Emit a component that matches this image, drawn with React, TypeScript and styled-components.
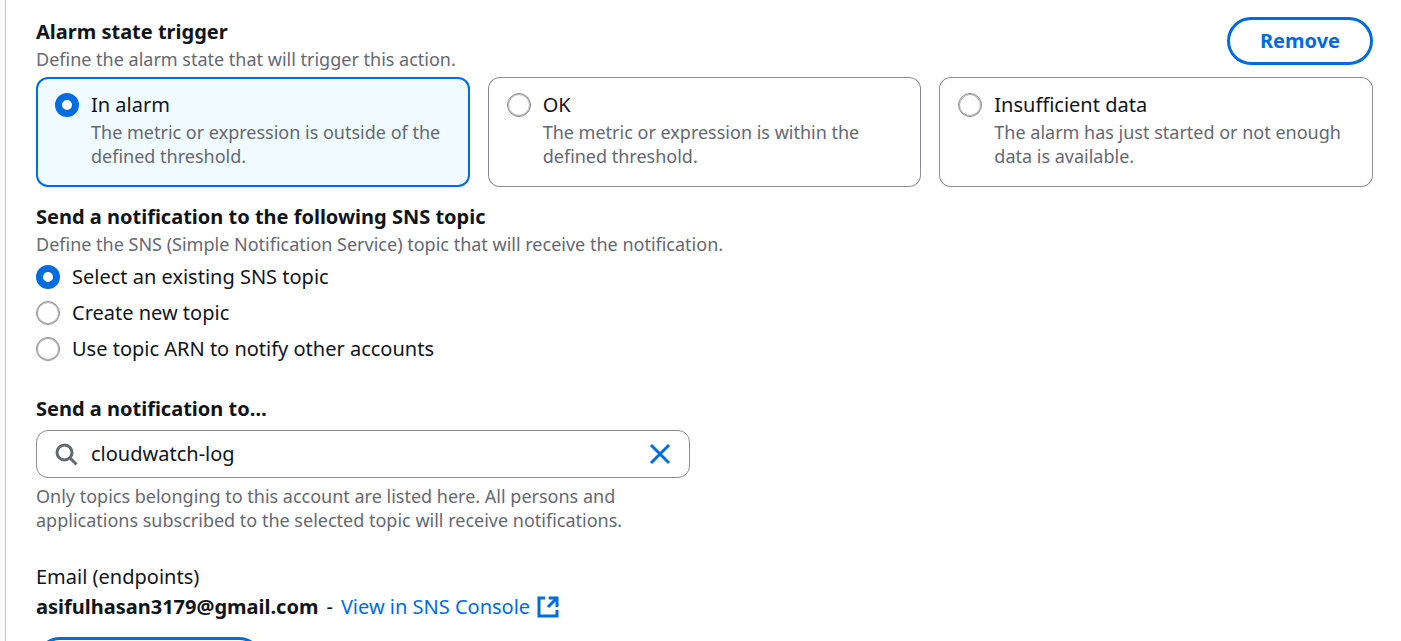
import React, { useState } from "react";
import styled, { createGlobalStyle } from "styled-components";

const GlobalStyle = createGlobalStyle`
  *, *::before, *::after { box-sizing: border-box; }
  body {
    margin: 0;
    background: #fafafa;
    color: #0f141a;
    font-family: "Noto Sans", "Open Sans", sans-serif;
    font-size: 20px;
    line-height: 30px;
  }
`;

const Page = styled.main`
  height: 100vh;
  padding-left: 5px;
  overflow: hidden;
`;

const Panel = styled.form`
  display: flex;
  flex-direction: column;
  min-height: 100%;
  padding: 17px 28px 30px 30px;
  border-left: 1px solid #c6c6cd;
  background: #ffffff;
`;

const Header = styled.div`
  display: flex;
  align-items: flex-start;
  justify-content: space-between;
`;

const Heading = styled.h3`
  margin: 0;
  font-size: 20px;
  font-weight: 700;
  line-height: 30px;
`;

const Hint = styled.p`
  margin: 0;
  color: #656871;
  font-size: 18px;
  line-height: 24px;
`;

const OutlineButton = styled.button`
  height: 48px;
  padding: 0 30px;
  border: 3px solid #006ce0;
  border-radius: 24px;
  background: #ffffff;
  color: #006ce0;
  font: inherit;
  font-weight: 700;
  cursor: pointer;
`;

const Tiles = styled.div`
  display: grid;
  grid-template-columns: repeat(3, 1fr);
  gap: 18px;
  margin-top: 6px;
`;

const Tile = styled.label<{ $selected: boolean }>`
  display: flex;
  gap: 12px;
  padding: 16px 12px 19px 19px;
  border-radius: 12px;
  background: ${(p) => (p.$selected ? "#f0fbff" : "#ffffff")};
  box-shadow: inset 0 0 0 ${(p) => (p.$selected ? "2px #006ce0" : "1px #8c8c94")};
  cursor: pointer;
`;

const TileText = styled.span`
  display: flex;
  flex-direction: column;
  gap: 3px;
  line-height: 24px;
`;

const TileHint = styled.span`
  color: #656871;
  font-size: 18px;
`;

const Radio = styled.input`
  flex: none;
  appearance: none;
  width: 24px;
  height: 24px;
  margin: 0;
  border: 1px solid #8c8c94;
  border-radius: 50%;
  background: #ffffff;
  box-shadow: inset 0 0 0 1px #b4b4ba;
  cursor: pointer;

  &:checked {
    border: 7px solid #006ce0;
    box-shadow: none;
  }
`;

const Section = styled.section`
  margin-top: 15px;
`;

const Options = styled.div`
  display: flex;
  flex-direction: column;
  align-items: flex-start;
  gap: 12px;
  margin-top: 9px;
`;

const Option = styled.label`
  display: flex;
  gap: 12px;
  line-height: 24px;
  cursor: pointer;
`;

const HalfWidth = styled.div`
  display: grid;
  grid-template-columns: 1fr 1fr;
  gap: 30px;
  margin-top: 33px;
`;

const Field = styled.div`
  display: flex;
  flex-direction: column;
  gap: 6px;
`;

const FieldLabel = styled.label`
  font-weight: 700;
`;

const SearchBox = styled.div`
  display: flex;
  align-items: center;
  gap: 13px;
  height: 48px;
  padding: 0 17px;
  border: 1px solid #8c8c94;
  border-radius: 12px;
`;

const SearchInput = styled.input`
  flex: 1;
  min-width: 0;
  padding: 0;
  border: 0;
  outline: 0;
  background: transparent;
  color: inherit;
  font: inherit;
`;

const ClearButton = styled.button`
  display: flex;
  padding: 0;
  border: 0;
  background: transparent;
  cursor: pointer;
`;

const Icon = styled.svg<{ $color: string }>`
  flex: none;
  width: 24px;
  height: 24px;
  fill: none;
  stroke: ${(p) => p.$color};
  stroke-width: 2;
`;

const Endpoints = styled.div`
  margin-top: 30px;
`;

const EndpointRow = styled.div`
  display: flex;
  align-items: center;
  gap: 8px;
`;

const ConsoleLink = styled.a`
  display: flex;
  align-items: center;
  gap: 6px;
  color: #006ce0;
  text-decoration: none;
`;

const Actions = styled.div`
  display: flex;
  margin-top: 15px;
`;

const states = [
  { id: "alarm", title: "In alarm", hint: "The metric or expression is outside of the defined threshold." },
  { id: "ok", title: "OK", hint: "The metric or expression is within the defined threshold." },
  { id: "insufficient", title: "Insufficient data", hint: "The alarm has just started or not enough data is available." },
];

const topics = [
  { id: "existing", title: "Select an existing SNS topic" },
  { id: "new", title: "Create new topic" },
  { id: "arn", title: "Use topic ARN to notify other accounts" },
];

export default function App() {
  const [state, setState] = useState("alarm");
  const [topic, setTopic] = useState("existing");
  const [query, setQuery] = useState("cloudwatch-log");

  return (
    <>
      <GlobalStyle />
      <Page>
        <Panel onSubmit={(e) => e.preventDefault()}>
          <Header>
            <div>
              <Heading>Alarm state trigger</Heading>
              <Hint>Define the alarm state that will trigger this action.</Hint>
            </div>
            <OutlineButton type="button">Remove</OutlineButton>
          </Header>
          <Tiles role="radiogroup" aria-label="Alarm state trigger">
            {states.map((s) => (
              <Tile key={s.id} $selected={state === s.id}>
                <Radio type="radio" name="state" checked={state === s.id} onChange={() => setState(s.id)} />
                <TileText>
                  <span>{s.title}</span>
                  <TileHint>{s.hint}</TileHint>
                </TileText>
              </Tile>
            ))}
          </Tiles>

          <Section>
            <Heading>Send a notification to the following SNS topic</Heading>
            <Hint>Define the SNS (Simple Notification Service) topic that will receive the notification.</Hint>
            <Options role="radiogroup" aria-label="SNS topic">
              {topics.map((t) => (
                <Option key={t.id}>
                  <Radio type="radio" name="topic" checked={topic === t.id} onChange={() => setTopic(t.id)} />
                  <span>{t.title}</span>
                </Option>
              ))}
            </Options>
          </Section>

          <HalfWidth>
            <Field>
              <FieldLabel htmlFor="topic-search">Send a notification to…</FieldLabel>
              <SearchBox>
                <Icon $color="#656871" viewBox="0 0 16 16" aria-hidden="true">
                  <circle cx="7" cy="7" r="5" />
                  <path d="m15 15-4.5-4.5" />
                </Icon>
                <SearchInput id="topic-search" type="text" value={query} onChange={(e) => setQuery(e.target.value)} />
                <ClearButton type="button" aria-label="Clear" onClick={() => setQuery("")}>
                  <Icon $color="#006ce0" viewBox="0 0 16 16" aria-hidden="true">
                    <path d="m2 2 12 12M14 2 2 14" />
                  </Icon>
                </ClearButton>
              </SearchBox>
              <Hint>
                Only topics belonging to this account are listed here. All persons and applications subscribed to the
                selected topic will receive notifications.
              </Hint>
            </Field>
          </HalfWidth>

          <Endpoints>
            <div>Email (endpoints)</div>
            <EndpointRow>
              <strong>asifulhasan3179@gmail.com</strong>
              <span>-</span>
              <ConsoleLink href="#sns-console">
                View in SNS Console
                <Icon $color="#006ce0" viewBox="0 0 16 16" aria-hidden="true">
                  <path d="M8.5 2H14v6" />
                  <path d="m8 8 6-6" />
                  <path d="M14 10v4H2V2h4" />
                </Icon>
              </ConsoleLink>
            </EndpointRow>
          </Endpoints>

          <Actions>
            <OutlineButton type="button">Add notification</OutlineButton>
          </Actions>
        </Panel>
      </Page>
    </>
  );
}
